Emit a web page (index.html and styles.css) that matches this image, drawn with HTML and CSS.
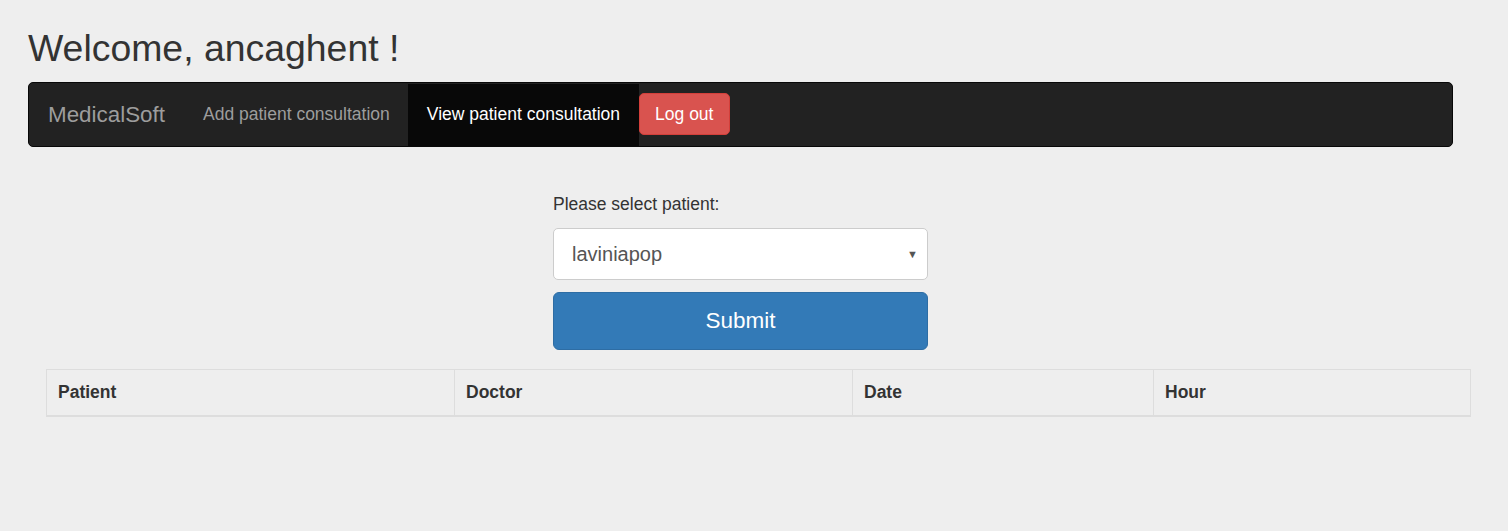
FILE: index.html
```html
<!DOCTYPE html>
<html>
<head>
<meta charset="utf-8">
<link rel="stylesheet" href="styles.css">
</head>
<body>
<div class="page">
  <h1 class="welcome">Welcome, ancaghent !</h1>
  <nav class="navbar">
    <span class="brand">MedicalSoft</span>
    <a class="nav-link">Add patient consultation</a>
    <a class="nav-link active">View patient consultation</a>
    <button class="btn-logout">Log out</button>
  </nav>
  <form class="patient-form">
    <label class="form-label">Please select patient:</label>
    <div class="select-wrap">
      <span class="select-value">laviniapop</span>
      <span class="caret">▼</span>
    </div>
    <button type="button" class="btn-submit">Submit</button>
  </form>
</div>
<table class="consult-table">
  <thead>
    <tr>
      <th class="c-patient">Patient</th>
      <th class="c-doctor">Doctor</th>
      <th class="c-date">Date</th>
      <th class="c-hour">Hour</th>
    </tr>
  </thead>
</table>
</body>
</html>
```

FILE: styles.css
```css
html, body {
  margin: 0;
  padding: 0;
  background: #eeeeee;
  font-family: "Liberation Sans", Arial, sans-serif;
  color: #333;
}
.page {
  padding-left: 28px;
  width: 1425px;
}
.welcome {
  margin: 0;
  padding-top: 26px;
  height: 56px;
  font-size: 37.4px;
  font-weight: 400;
  line-height: 44px;
  color: #333;
}
.navbar {
  display: flex;
  align-items: center;
  height: 63px;
  background: #222;
  border: 1px solid #080808;
  border-radius: 5px;
  box-sizing: content-box;
}
.brand {
  color: #9d9d9d;
  font-size: 22.4px;
  padding: 0 19.5px 0 19px;
}
.nav-link {
  color: #9d9d9d;
  font-size: 17.5px;
  padding: 0 18.5px;
  height: 62px;
  display: flex;
  align-items: center;
}
.nav-link.active {
  background: #080808;
  color: #fff;
}
.btn-logout {
  background: #d9534f;
  border: 1px solid #d43f3a;
  border-radius: 5px;
  color: #fff;
  font-family: inherit;
  font-size: 17.5px;
  height: 42px;
  padding: 0 15.5px;
  margin: -1px 0 0 0;
}
.patient-form {
  width: 375px;
  margin: 45px auto 0;
  display: flex;
  flex-direction: column;
}
.form-label {
  font-size: 17.5px;
  line-height: 25px;
  color: #333;
  margin-bottom: 11px;
}
.select-wrap {
  height: 50px;
  background: #fff;
  border: 1px solid #ccc;
  border-radius: 5px;
  display: flex;
  align-items: center;
  justify-content: space-between;
  padding: 0 9px 0 18px;
}
.select-value {
  font-size: 20px;
  color: #555;
}
.caret {
  font-size: 11px;
  color: #555;
}
.btn-submit {
  margin-top: 12px;
  height: 58px;
  background: #337ab7;
  border: 1px solid #2e6da4;
  border-radius: 6px;
  color: #fff;
  font-family: inherit;
  font-size: 22.5px;
}
.consult-table {
  margin: 19px 0 0 46px;
  width: 1425px;
  border-collapse: collapse;
}
.consult-table th {
  text-align: left;
  font-size: 17.5px;
  font-weight: 700;
  color: #333;
  padding: 10px 11px;
  line-height: 25px;
  border: 1px solid #ddd;
  border-bottom: 2px solid #ddd;
}
.c-patient { width: 408px; box-sizing: border-box; }
.c-doctor { width: 398px; box-sizing: border-box; }
.c-date { width: 301px; box-sizing: border-box; }
```
